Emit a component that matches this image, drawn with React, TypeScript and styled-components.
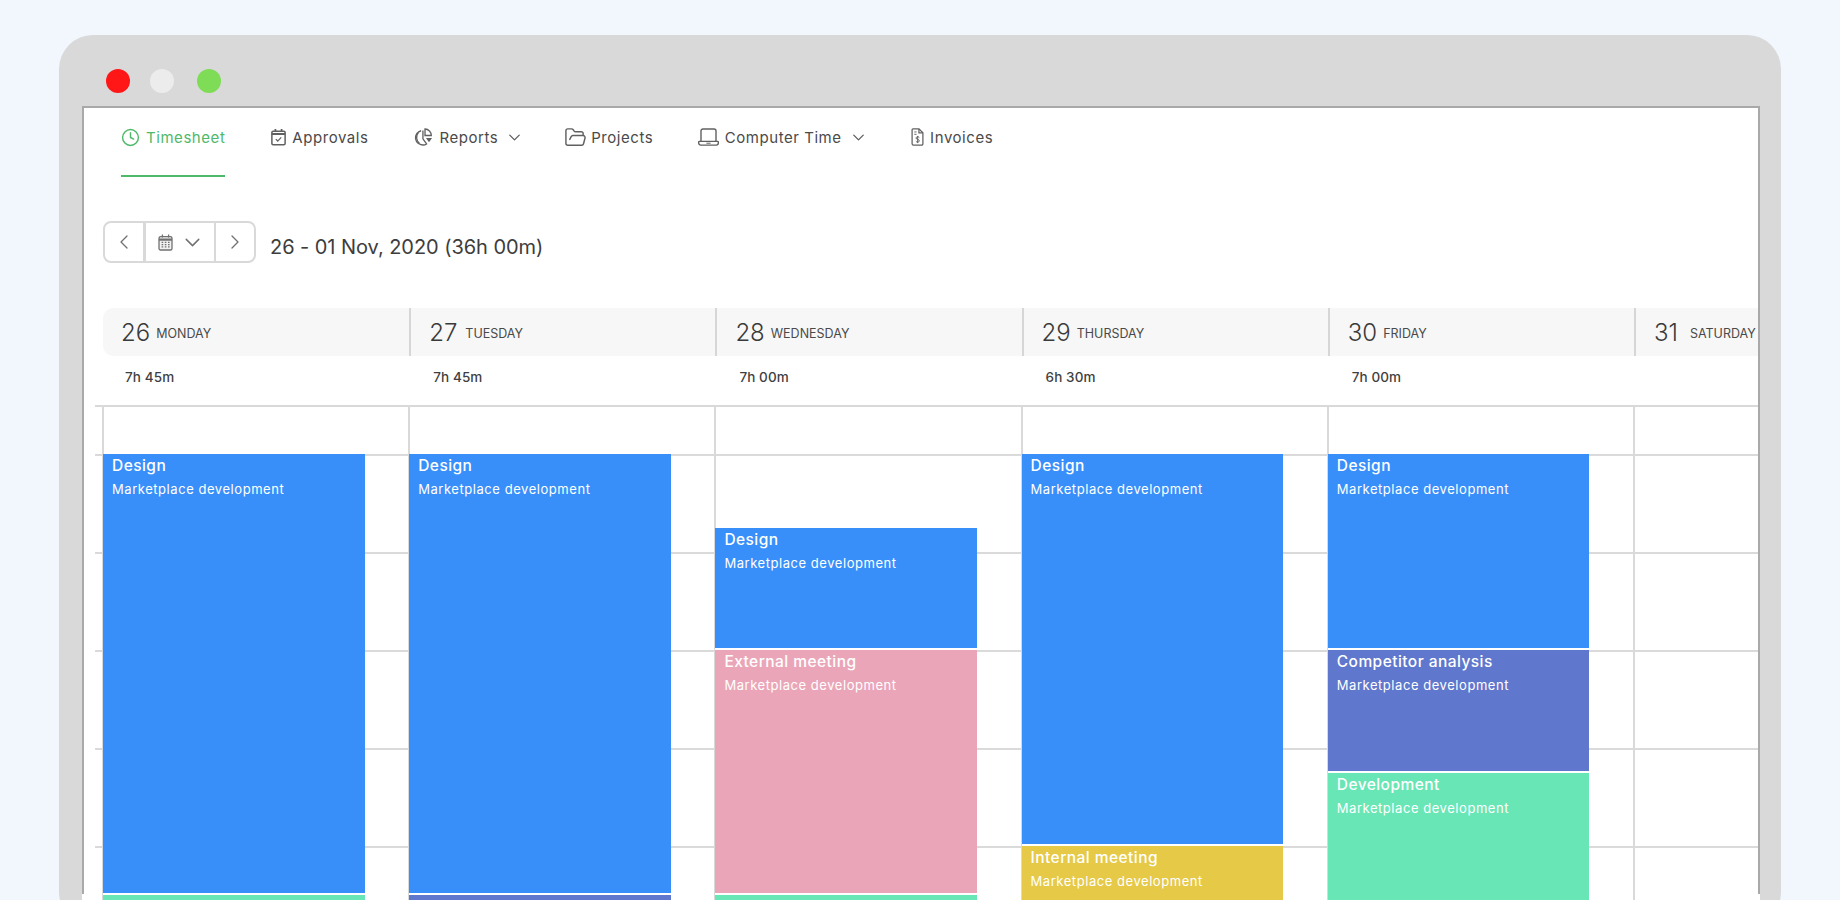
import styled, { createGlobalStyle } from 'styled-components'
import { ChevronDown, ChevronLeft, ChevronRight, Clock, FolderOpen } from 'lucide-react'

const HOUR = 98

const GlobalStyle = createGlobalStyle`
  html, body {
    margin: 0;
    height: 900px;
    overflow: hidden;
    background: #f2f7fe;
    font-family: Inter, "Noto Sans", "Liberation Sans", sans-serif;
  }
`

const days = [
  { date: '26', name: 'MONDAY', gap: 6, total: '7h 45m' },
  { date: '27', name: 'TUESDAY', gap: 8, total: '7h 45m' },
  { date: '28', name: 'WEDNESDAY', gap: 6, total: '7h 00m' },
  { date: '29', name: 'THURSDAY', gap: 6, total: '6h 30m' },
  { date: '30', name: 'FRIDAY', gap: 6, total: '7h 00m' },
  { date: '31', name: 'SATURDAY', gap: 12, total: '' },
]

const columns = [
  {
    offset: 0,
    events: [
      { title: 'Design', hours: 4.5, color: '#398ffa' },
      { title: 'Development', hours: 1, color: '#69e6b6' },
    ],
  },
  {
    offset: 0,
    events: [
      { title: 'Design', hours: 4.5, color: '#398ffa' },
      { title: 'Competitor analysis', hours: 1, color: '#5f77cc' },
    ],
  },
  {
    offset: 0.75,
    events: [
      { title: 'Design', hours: 1.25, color: '#398ffa' },
      { title: 'External meeting', hours: 2.5, color: '#eaa6b8' },
      { title: 'Development', hours: 1, color: '#69e6b6' },
    ],
  },
  {
    offset: 0,
    events: [
      { title: 'Design', hours: 4, color: '#398ffa' },
      { title: 'Internal meeting', hours: 1, color: '#e5c947' },
    ],
  },
  {
    offset: 0,
    events: [
      { title: 'Design', hours: 2, color: '#398ffa' },
      { title: 'Competitor analysis', hours: 1.25, color: '#5f77cc' },
      { title: 'Development', hours: 2, color: '#69e6b6' },
    ],
  },
  { offset: 0, events: [] },
]

function ReportsIcon() {
  return (
    <svg width="19" height="20" viewBox="0 0 20 20" fill="none" stroke="currentColor" strokeWidth="1.4">
      <path d="M7.5 3.4A7.6 7.6 0 0 0 9.6 18.4c1.6 0 2.8-.5 3.6-1.1L9.4 12V3.2" />
      <path d="M4.6 5.4a7.6 7.6 0 0 0 1 11" />
      <path d="M11.6 1.6a6.8 6.8 0 0 1 6.6 6.8h-6.6z" />
      <path d="M12.6 11h6.4l-3.2 4.6z" fill="currentColor" stroke="none" />
    </svg>
  )
}

function ApprovalsIcon() {
  return (
    <svg width="15" height="18" viewBox="0 0 17 20" fill="none" stroke="currentColor" strokeWidth="1.7">
      <rect x="1" y="3.4" width="15" height="15.4" rx="1.4" />
      <path d="M1 6.6h15" strokeWidth="2.4" />
      <path d="M5 1v3M12 1v3" strokeWidth="2" />
      <path d="M5.4 12.4l2.2 2.2 4-4.2" strokeWidth="1.4" />
    </svg>
  )
}

function LaptopIcon() {
  return (
    <svg width="21" height="18" viewBox="0 0 21 18" fill="none" stroke="currentColor" strokeWidth="1.4">
      <path d="M3 13.4V3a2 2 0 0 1 2-2h11a2 2 0 0 1 2 2v10.4" />
      <path d="M1.4 13.4h18.2a.7.7 0 0 1 .7.7v1a2 2 0 0 1-2 2H2.7a2 2 0 0 1-2-2v-1a.7.7 0 0 1 .7-.7z" />
      <path d="M8.4 15.2h4.2" strokeWidth="1" />
    </svg>
  )
}

function InvoiceIcon() {
  return (
    <svg width="13" height="18" viewBox="0 0 14 20" fill="none" stroke="currentColor" strokeWidth="1.4">
      <path d="M2 1h6.6L13 5.4V17.6a1.4 1.4 0 0 1-1.4 1.4H2.4A1.4 1.4 0 0 1 1 17.6V2a1 1 0 0 1 1-1z" />
      <path d="M8.6 1v4.4H13" />
      <path d="M3.4 4.4h2.6M3.4 7h2.6" strokeWidth="1" />
      <path d="M9 10.6C8.6 10 8 9.8 7.2 9.8c-1 0-1.8.5-1.8 1.4 0 2 3.6 1 3.6 3 0 .9-.8 1.4-1.8 1.4-.9 0-1.6-.3-2-1M7.2 8.8v8" strokeWidth="1.1" />
    </svg>
  )
}

function CalendarIcon() {
  return (
    <svg width="15" height="17" viewBox="0 0 15 17" fill="none" stroke="#707070" strokeWidth="1.3">
      <rect x="1" y="2.6" width="13" height="13.4" rx="1.6" fill="#f1f1f1" />
      <path d="M1 5.6h13" strokeWidth="2.2" />
      <path d="M4.4.6v3M10.6.6v3" />
      <path d="M3.6 8.4h8M3.6 10.6h8M3.6 12.8h8" strokeWidth="1.3" strokeDasharray="1.6 1.6" />
    </svg>
  )
}

export default function App() {
  return (
    <>
      <GlobalStyle />
      <Page>
        <Window>
          <Dots>
            <Dot color="#ff1616" />
            <Dot color="#ececec" />
            <Dot color="#7fdc57" />
          </Dots>
          <Content>
            <Nav>
              <NavItem active space={0}>
                <Clock size={19} strokeWidth={1.8} />
                Timesheet
              </NavItem>
              <NavItem space={46}>
                <ApprovalsIcon />
                Approvals
              </NavItem>
              <NavItem space={46}>
                <ReportsIcon />
                Reports
                <NavChevron size={19} strokeWidth={1.7} />
              </NavItem>
              <NavItem space={40}>
                <ProjectsIcon size={23} strokeWidth={1.5} />
                Projects
              </NavItem>
              <NavItem space={44.5}>
                <LaptopIcon />
                Computer Time
                <NavChevron size={19} strokeWidth={1.7} />
              </NavItem>
              <NavItem space={43.5}>
                <InvoiceIcon />
                Invoices
              </NavItem>
            </Nav>
            <DateBar>
              <DatePicker>
                <ArrowButton>
                  <ChevronLeft size={24} strokeWidth={1.3} />
                </ArrowButton>
                <CalendarButton>
                  <CalendarIcon />
                  <ChevronDown size={25} strokeWidth={1.4} />
                </CalendarButton>
                <ArrowButton>
                  <ChevronRight size={24} strokeWidth={1.3} />
                </ArrowButton>
              </DatePicker>
              <DateLabel>26 - 01 Nov, 2020 (36h 00m)</DateLabel>
            </DateBar>
            <DayHeader>
              {days.map((day) => (
                <DayCell key={day.date}>
                  <DayNumber>{day.date}</DayNumber>
                  <DayName gap={day.gap}>{day.name}</DayName>
                </DayCell>
              ))}
            </DayHeader>
            <Totals>
              {days.map((day) => (
                <Total key={day.date}>{day.total}</Total>
              ))}
            </Totals>
            <Grid>
              {columns.map((column, i) => (
                <Column key={i} offset={column.offset}>
                  {column.events.map((event, j) => (
                    <Event key={j} hours={event.hours} color={event.color}>
                      <EventTitle>{event.title}</EventTitle>
                      <EventProject>Marketplace development</EventProject>
                    </Event>
                  ))}
                </Column>
              ))}
            </Grid>
          </Content>
        </Window>
      </Page>
    </>
  )
}

const Page = styled.div`
  height: 900px;
  padding: 35px 59px 0;
  box-sizing: border-box;
  overflow: hidden;
`

const Window = styled.div`
  height: 891px;
  background: #d9d9d9;
  border-radius: 34px;
  padding-left: 25px;
  padding-right: 21px;
  overflow: hidden;
`

const Dots = styled.div`
  display: flex;
  gap: 19.5px;
  padding: 34px 0 0 22px;
  height: 37px;
`

const Dot = styled.span<{ color: string }>`
  width: 24px;
  height: 24px;
  border-radius: 50%;
  background: ${(props) => props.color};
  &:nth-child(2) {
    margin-right: 4px;
  }
`

/* the side lines stop at y=894 in the picture while the white goes on */
const Content = styled.div`
  position: relative;
  margin-left: -2px;
  height: 870px;
  box-sizing: border-box;
  background: #fff;
  border-top: 2px solid #a9a9a9;
  padding: 0 2px;
  overflow: hidden;
  &::before,
  &::after {
    content: '';
    position: absolute;
    top: 0;
    width: 2px;
    height: 786px;
    background: #a9a9a9;
  }
  &::before {
    left: 0;
  }
  &::after {
    right: 0;
  }
`

const Nav = styled.nav`
  display: flex;
  padding-left: 37px;
  height: 69px;
`

const NavItem = styled.div<{ active?: boolean; space: number }>`
  display: flex;
  align-items: center;
  gap: 6px;
  height: 69px;
  margin-left: ${(props) => props.space}px;
  box-sizing: border-box;
  padding-bottom: 9px;
  font-size: 15px;
  letter-spacing: 0.55px;
  white-space: nowrap;
  color: ${(props) => (props.active ? '#4fb96a' : '#4a4a4a')};
  border-bottom: 2px solid ${(props) => (props.active ? '#4fb96a' : 'transparent')};
  & > svg {
    flex: none;
    color: ${(props) => (props.active ? '#4fb96a' : '#606060')};
  }
`

const NavChevron = styled(ChevronDown)`
  margin-left: 1px;
`

const ProjectsIcon = styled(FolderOpen)`
  margin-right: -2px;
`

const DateBar = styled.div`
  display: flex;
  align-items: center;
  gap: 14px;
  padding: 44px 0 0 19px;
`

const DatePicker = styled.div`
  display: flex;
  width: 153px;
  height: 42px;
  box-sizing: border-box;
  border: 2px solid #d9d9d9;
  border-radius: 8px;
  color: #707070;
`

const ArrowButton = styled.div`
  flex: 1;
  display: flex;
  align-items: center;
  justify-content: center;
`

const CalendarButton = styled.div`
  width: 73px;
  display: flex;
  align-items: center;
  gap: 7px;
  padding-left: 12px;
  border-left: 3px solid #d9d9d9;
  border-right: 2px solid #d9d9d9;
  box-sizing: border-box;
`

const DateLabel = styled.div`
  font-size: 20px;
  letter-spacing: -0.05px;
  color: #3d3d3d;
  padding-top: 9px;
`

const DayHeader = styled.div`
  display: flex;
  margin: 45px 0 0 19px;
  height: 48px;
  background: #f7f7f7;
  border-radius: 10px 0 0 10px;
`

const DayCell = styled.div`
  flex: none;
  width: 306.2px;
  box-sizing: border-box;
  display: flex;
  align-items: center;
  padding-left: 18px;
  white-space: nowrap;
  & + & {
    border-left: 2px solid #d6d6d6;
  }
`

const DayNumber = styled.span`
  font-size: 24px;
  font-weight: 300;
  color: #3a3a3a;
`

const DayName = styled.span<{ gap: number }>`
  margin-left: ${(props) => props.gap}px;
  padding-top: 2px;
  font-size: 12.5px;
  color: #4a4a4a;
`

const Totals = styled.div`
  display: flex;
  height: 49px;
  padding-left: 19px;
`

const Total = styled.div`
  flex: none;
  width: 306.2px;
  box-sizing: border-box;
  padding: 13px 0 0 22px;
  font-size: 13.5px;
  font-weight: 500;
  letter-spacing: 0.1px;
  color: #3f3f3f;
  & + & {
    padding-left: 24px;
  }
`

const Grid = styled.div`
  display: flex;
  margin-left: 11px;
  padding-left: 7px;
  height: 500px;
  background:
    repeating-linear-gradient(
      to bottom,
      transparent 0,
      transparent 96px,
      #dadada 96px,
      #dadada 98px
    )
    0 -49px no-repeat;
  background-size: 100% 600px;
  border-top: 2px solid #d9d9d9;
`

const Column = styled.div<{ offset: number }>`
  flex: none;
  width: 306.2px;
  box-sizing: border-box;
  border-left: 2px solid #d9d9d9;
  padding-top: ${(props) => 47 + props.offset * HOUR}px;
  padding-right: 43.5px;
`

const Event = styled.div<{ hours: number; color: string }>`
  height: ${(props) => props.hours * HOUR}px;
  box-sizing: border-box;
  padding: 2px 0 0 9px;
  background: ${(props) => props.color};
  border-bottom: 2px solid #fff;
  color: #fff;
  margin-left: -1px;
`

const EventTitle = styled.div`
  font-size: 15.5px;
  font-weight: 500;
  letter-spacing: 0.45px;
  line-height: 20px;
`

const EventProject = styled.div`
  margin-top: 4px;
  font-size: 13px;
  letter-spacing: 0.55px;
  line-height: 18px;
`
